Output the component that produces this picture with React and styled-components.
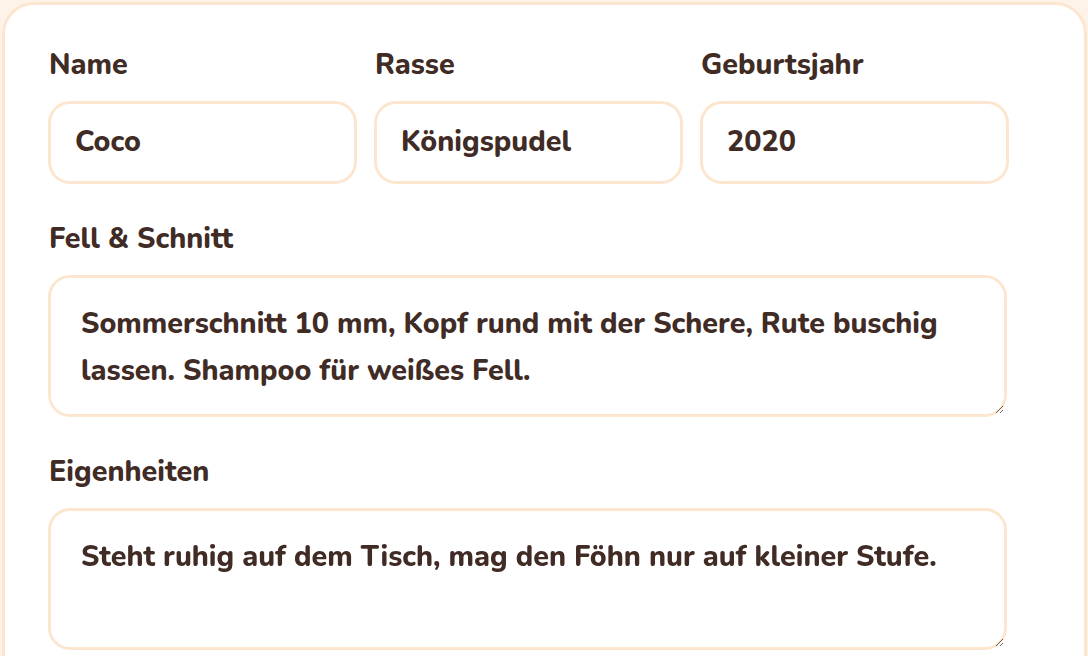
import React from 'react';
import styled, {createGlobalStyle} from 'styled-components';

const GlobalStyle = createGlobalStyle`
  html, body {
    margin: 0;
    background: #fef3e8;
  }
  body {
    font-family: "Nunito", "Lato", "Open Sans", sans-serif;
    color: #402b25;
  }
`;

export default function App() {
  return (
    <>
      <GlobalStyle/>
      <Card>
        <Row>
          <Field label="Name" value="Coco"/>
          <Field label="Rasse" value="Königspudel"/>
          <Field label="Geburtsjahr" value="2020"/>
        </Row>
        <AreaField
          label="Fell & Schnitt"
          value="Sommerschnitt 10 mm, Kopf rund mit der Schere, Rute buschig lassen. Shampoo für weißes Fell."/>
        <AreaField
          label="Eigenheiten"
          value="Steht ruhig auf dem Tisch, mag den Föhn nur auf kleiner Stufe."/>
      </Card>
    </>
  );
}

function Field(props) {
  return (
    <Group>
      <Label>{props.label}</Label>
      <Input type="text" defaultValue={props.value}/>
    </Group>
  );
}

function AreaField(props) {
  return (
    <Group>
      <Label>{props.label}</Label>
      <TextArea defaultValue={props.value}/>
    </Group>
  );
}

const Card = styled.div`
  margin: 2px 1px 0 2px;
  min-height: 700px;
  background: #fff;
  border: 3px solid #fde6d0;
  border-radius: 32px;
  padding: 42px 74px 0 43px;
  display: flex;
  flex-direction: column;
  gap: 37px;
  box-sizing: border-box;
`;

const Row = styled.div`
  display: grid;
  grid-template-columns: repeat(3, 309px);
  gap: 17px;
`;

const Group = styled.div`
  display: flex;
  flex-direction: column;
  gap: 18px;
  width: 100%;
  max-width: 959px;
`;

const Label = styled.label`
  font-size: 28.7px;
  font-weight: 800;
  line-height: 36px;
  padding-left: 1px;
`;

const Input = styled.input`
  box-sizing: border-box;
  width: 100%;
  height: 83px;
  border: 3px solid #fde6d0;
  border-radius: 22px;
  padding: 0 24px 2px;
  font-family: inherit;
  font-size: 28.7px;
  font-weight: 800;
  color: #402b25;
  background: #fff;
  outline: none;
`;

const TextArea = styled.textarea`
  box-sizing: border-box;
  width: 100%;
  height: 142px;
  border: 3px solid #fde6d0;
  border-radius: 22px;
  padding: 22px 30px;
  font-family: inherit;
  font-size: 28.7px;
  font-weight: 800;
  line-height: 47px;
  color: #402b25;
  background: #fff;
  outline: none;
  resize: vertical;
`;
